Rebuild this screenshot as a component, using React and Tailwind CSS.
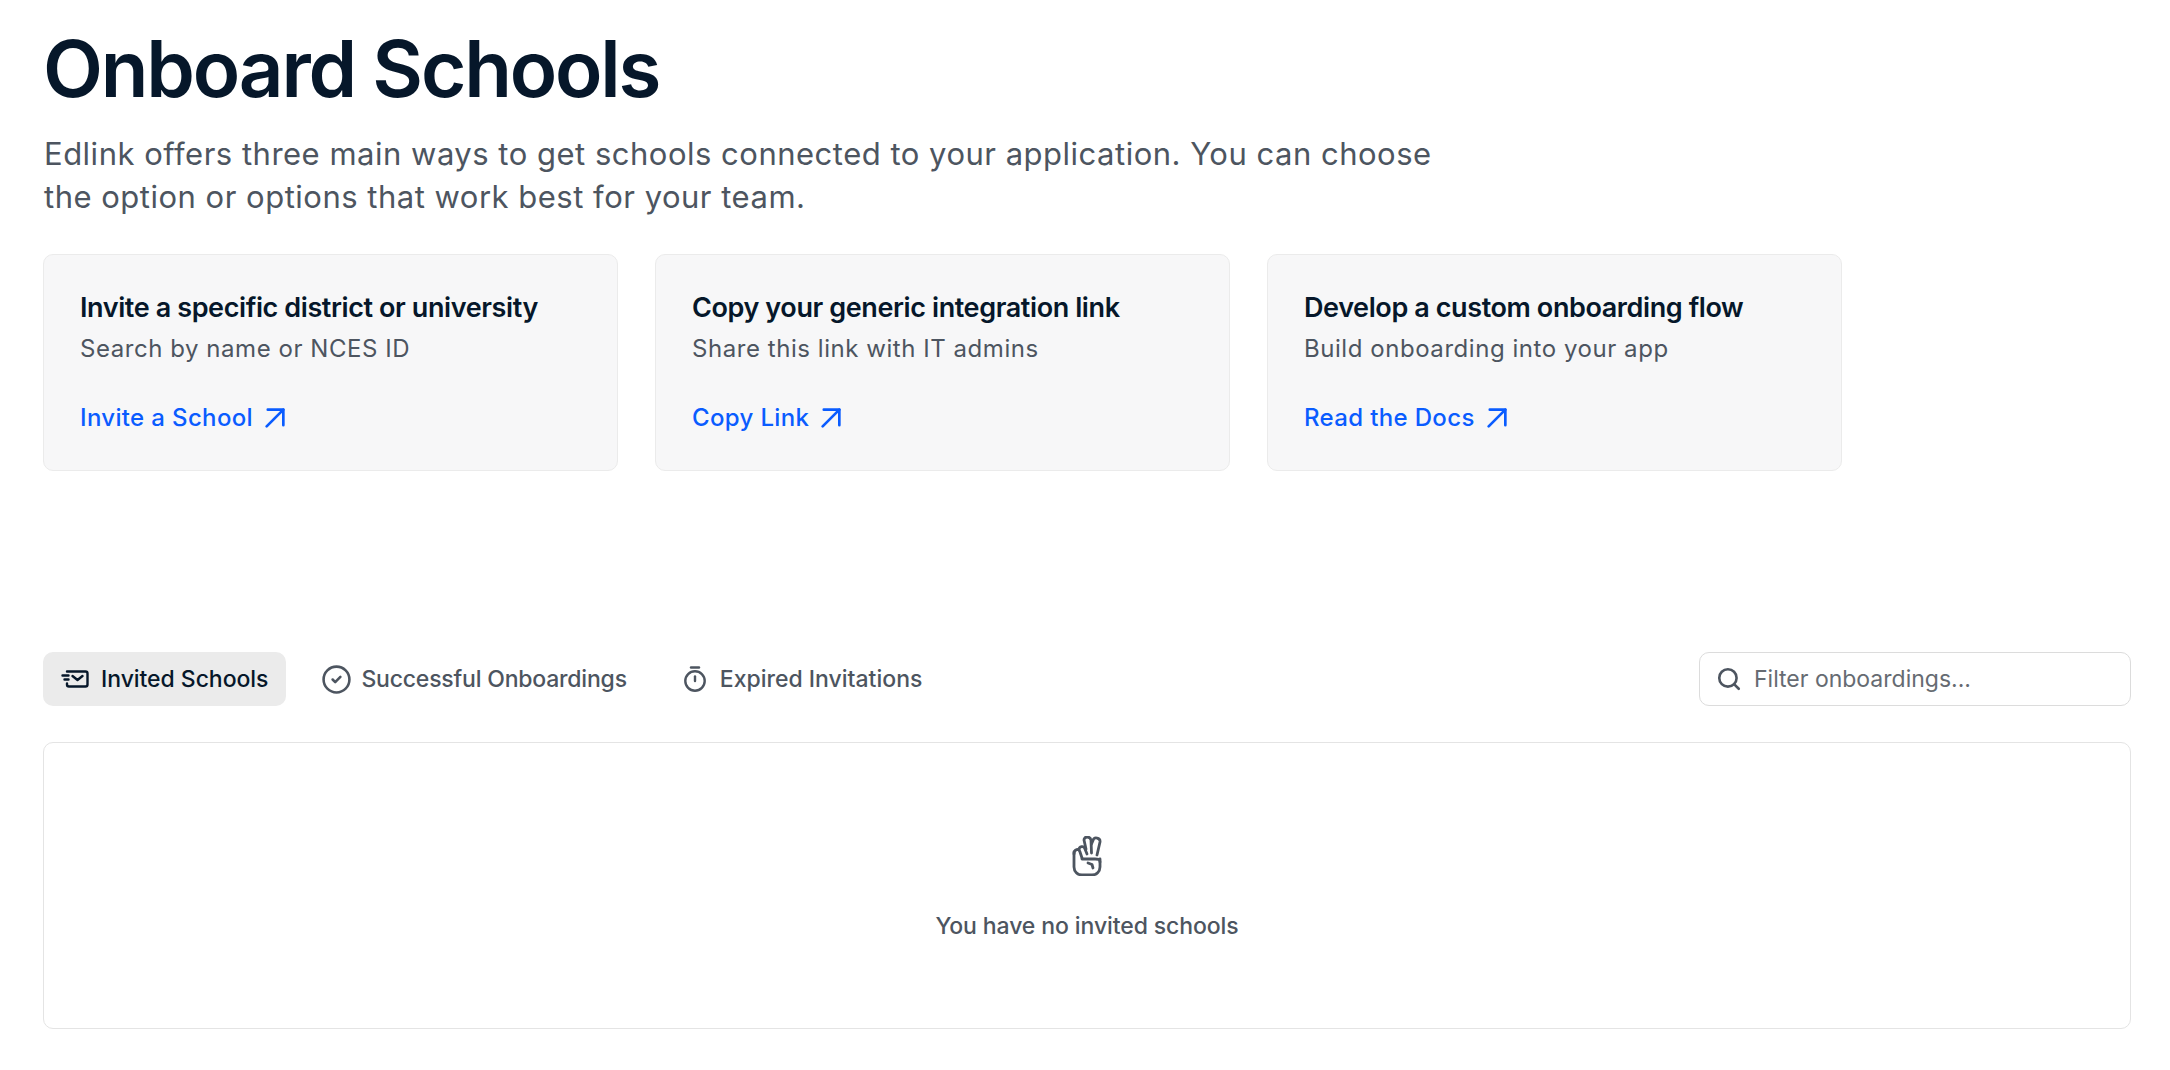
import React from 'react'
import { CircleCheck, Search } from 'lucide-react'

function ArrowIcon({ className }) {
    return (
        <svg viewBox="0 0 18 18" fill="none" stroke="currentColor" strokeWidth="2.400" strokeLinecap="round" strokeLinejoin="round" className={className}>
            <path d="M1.500 16.500L16.500 1.500" />
            <path d="M2.500 1.500h14v14" />
        </svg>
    )
}

function MailIcon({ className }) {
    return (
        <svg viewBox="0 0 28 18" fill="none" stroke="currentColor" strokeWidth="2.400" strokeLinecap="round" strokeLinejoin="round" className={className}>
            <path d="M6 1.500h18.500a2 2 0 0 1 2 2v11a2 2 0 0 1-2 2H8a2 2 0 0 1-2-2v-1" />
            <path d="M11.500 6l5 4 5-4" />
            <path d="M1.500 5.500h6M3.500 9.500h4" />
        </svg>
    )
}

function TimerIcon({ className }) {
    return (
        <svg viewBox="0 0 22 26" fill="none" stroke="currentColor" strokeWidth="2.400" strokeLinecap="round" className={className}>
            <path d="M7 1.500h8" />
            <circle cx="11" cy="15" r="9.700" />
            <path d="M11 10.500v4.500" />
        </svg>
    )
}

function HandIcon({ className }) {
    return (
        <svg viewBox="0 0 30 40" fill="none" stroke="currentColor" strokeWidth="2.800" strokeLinecap="round" strokeLinejoin="round" className={className}>
            <path d="M2 16v15a8 8 0 0 0 8 8h10a8 8 0 0 0 8-8v-8" />
            <path d="M2 18c0-5 5-6 6-2l2 6" />
            <path d="M7 14c0-4 5-4.500 6-1l2 5" />
            <path d="M14 13l-2-9c0-4 6-4 7 0l.5 13" />
            <path d="M19.500 8L21 4.500c1-4 7.500-3 7 1.500L25 19" />
            <path d="M10 23h13c3 0 5 0 5 3" />
            <path d="M16 27l4 1.500 1 3.500" />
        </svg>
    )
}

const cards = [
    { title: 'Invite a specific district or university', sub: 'Search by name or NCES ID', link: 'Invite a School' },
    { title: 'Copy your generic integration link', sub: 'Share this link with IT admins', link: 'Copy Link' },
    { title: 'Develop a custom onboarding flow', sub: 'Build onboarding into your app', link: 'Read the Docs' },
]

export default function App() {
    return (
        <div className="min-h-[1070px] bg-white pl-[43px] pr-[39px] pt-[25px] font-['Inter',sans-serif]">
            <h1 className="text-[78px] leading-[88px] font-semibold tracking-[-2.2px] text-[#06172a]">Onboard Schools</h1>
            <p className="ml-[1px] mt-[19px] max-w-[1420px] text-[31px] leading-[43px] tracking-[0.5px] text-[#4d5560]">
                Edlink offers three main ways to get schools connected to your application. You can choose the option or options that work best for your team.
            </p>

            {/* cards */}
            <div className="mt-[36px] flex gap-[37px]">
                {cards.map((el) => (
                    <div key={el.title} className="h-[217px] w-[575px] rounded-[10px] border border-[#ebebeb] bg-[#f7f7f8] pl-[36px] pt-[33px]">
                        <div className="text-[27px] leading-[40px] font-semibold tracking-[-0.4px] text-[#06172a]">{el.title}</div>
                        <div className="mt-[1px] text-[24px] leading-[40px] tracking-[0.55px] text-[#4d5560]">{el.sub}</div>
                        <a className="mt-[29px] flex items-center gap-[12px] text-[24px] leading-[40px] font-medium tracking-[0.35px] text-[#0a5cff]">
                            {el.link}
                            <ArrowIcon className="h-[20px] w-[20px]" />
                        </a>
                    </div>
                ))}
            </div>

            {/* tabs */}
            <div className="mt-[181px] flex items-center justify-between">
                <div className="flex items-center gap-[18px]">
                    <div className="flex h-[54px] items-center gap-[12px] rounded-[10px] bg-[#ebebeb] px-[18px] text-[23px] font-medium tracking-[-0.05px] text-[#06172a]">
                        <MailIcon className="h-[18px] w-[28px]" />
                        Invited Schools
                    </div>
                    <div className="flex h-[54px] items-center gap-[12px] rounded-[10px] px-[18px] text-[23px] font-medium tracking-[-0.2px] text-[#4d5560]">
                        <CircleCheck className="-ml-[1px] -mr-[3px] h-[31px] w-[31px]" strokeWidth={2} />
                        Successful Onboardings
                    </div>
                    <div className="ml-[3px] flex h-[54px] items-center gap-[14px] rounded-[10px] px-[18px] text-[23px] font-medium text-[#4d5560]">
                        <TimerIcon className="h-[26px] w-[22px]" />
                        Expired Invitations
                    </div>
                </div>
                <div className="flex h-[54px] w-[432px] items-center gap-[12px] rounded-[10px] border border-[#dcdcdc] pl-[16px]">
                    <Search className="h-[26px] w-[26px] text-[#4d5560]" strokeWidth={2.4} />
                    <input placeholder="Filter onboardings..." className="flex-1 bg-transparent pt-[1px] text-[23px] outline-none placeholder:text-[#666b72]" />
                </div>
            </div>

            {/* empty state */}
            <div className="mt-[36px] flex h-[287px] flex-col items-center rounded-[10px] border border-[#e4e4e4] pt-[93px]">
                <HandIcon className="h-[40px] w-[30px] text-[#4d5560]" />
                <div className="mt-[33px] text-[23px] font-medium tracking-[-0.1px] text-[#4d5560]">You have no invited schools</div>
            </div>
        </div>
    )
}
